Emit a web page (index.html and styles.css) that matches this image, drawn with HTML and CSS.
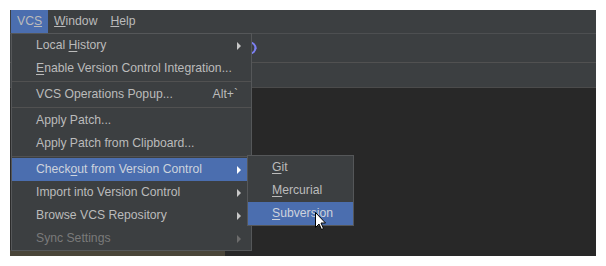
FILE: index.html
```html
<!DOCTYPE html>
<html lang="en">
<head>
    <meta charset="UTF-8">
    <title>VCS Menu</title>
    <link rel="stylesheet" href="styles.css">
</head>
<body>

<div class="ide">
    <!-- Main menu bar -->
    <div class="menubar">
        <span class="menu-title is-open">VC<u>S</u></span>
        <span class="menu-title"><u>W</u>indow</span>
        <span class="menu-title"><u>H</u>elp</span>
    </div>

    <!-- Toolbar (mostly hidden behind the menu) -->
    <div class="toolbar">
        <svg class="tool-icon" width="16" height="16" viewBox="0 0 16 16">
            <path d="M8 2.5 A5.5 5.5 0 1 1 2.5 8" fill="none" stroke="#7b7ff0" stroke-width="2"/>
            <path d="M12 11 L15 8 L13 7 Z" fill="#7b7ff0"/>
        </svg>
    </div>

    <!-- Navigation bar -->
    <div class="navbar"></div>

    <div class="workspace">
        <div class="project">
            <div class="project-tree"></div>
            <div class="project-row"></div>
        </div>
        <div class="editor"></div>
    </div>

    <!-- VCS dropdown -->
    <div class="popup vcs-menu">
        <div class="item"><span>Local <u>H</u>istory</span><i class="arrow"></i></div>
        <div class="item"><span><u>E</u>nable Version Control Integration...</span></div>
        <div class="separator"></div>
        <div class="item"><span>VCS Operations Popup...</span><span class="shortcut">Alt+`</span></div>
        <div class="separator"></div>
        <div class="item"><span>Apply Patch...</span></div>
        <div class="item"><span>Apply Patch from Clipboard...</span></div>
        <div class="separator"></div>
        <div class="item is-selected"><span>Check<u>o</u>ut from Version Control</span><i class="arrow"></i></div>
        <div class="item"><span>Import into Version Control</span><i class="arrow"></i></div>
        <div class="item"><span>Browse VCS Repository</span><i class="arrow"></i></div>
        <div class="item is-disabled"><span>Sync Settings</span><i class="arrow"></i></div>

        <!-- Checkout submenu -->
        <div class="popup checkout-menu">
            <div class="item"><span><u>G</u>it</span></div>
            <div class="item"><span><u>M</u>ercurial</span></div>
            <div class="item is-selected"><span><u>S</u>ubversion</span></div>
        </div>
    </div>

    <!-- Mouse pointer -->
    <svg class="cursor" width="12" height="19" viewBox="0 0 12 19">
        <path d="M0.5 0.5 L0.5 15.5 L4 12 L6.5 17.5 L8.5 16.5 L6 11 L10.5 11 Z" fill="#ffffff" stroke="#000000" stroke-width="1"/>
    </svg>
</div>

</body>
</html>
```

FILE: styles.css
```css
body {
    margin: 0;
    background-color: #ffffff;
    font-family: "Liberation Sans", Arial, sans-serif;
    font-size: 12.2px;
}

.ide {
    position: relative;
    display: flex;
    flex-direction: column;
    width: 586px;
    height: 246px;
    margin: 10px;
    background-color: #3c3f41;
}

.menubar {
    display: flex;
    height: 23px;
    padding-left: 1px;
    border-bottom: 1px solid #4d4f51;
}

.menu-title {
    padding: 0 6px;
    line-height: 23px;
    color: #bbbbbb;
}

.menu-title:last-child {
    margin-left: 1px;
}

.menu-title.is-open {
    background-color: #4b6eaf;
}

.toolbar {
    display: flex;
    align-items: center;
    height: 28px;
    border-bottom: 1px solid #515151;
}

.tool-icon {
    margin-left: 232px;
}

.navbar {
    height: 24px;
    border-bottom: 1px solid #4b4b4b;
}

.workspace {
    display: flex;
    flex: 1;
}

.project {
    display: flex;
    flex-direction: column;
    width: 215px;
    background-color: #2b2b2b;
}

.project-tree {
    flex: 1;
}

.project-row {
    height: 6px;
    background-color: #4a4539;
}

.editor {
    flex: 1;
    background-color: #282828;
}

/* Popup menus */
.popup {
    position: absolute;
    box-sizing: border-box;
    background-color: #3c3f41;
    border: 1px solid #555759;
}

.vcs-menu {
    left: 1px;
    top: 23px;
    width: 241px;
}

.checkout-menu {
    left: 235px;
    top: 121px;
    width: 107px;
}

.item {
    display: flex;
    align-items: center;
    justify-content: space-between;
    height: 23px;
    padding: 0 10px 0 24px;
    color: #bbbbbb;
    white-space: nowrap;
}

.item > span {
    margin-top: -1px;
}

.item u {
    text-underline-offset: 2px;
}

.item.is-selected {
    background-color: #4b6eaf;
    color: #cdd3dd;
}

.item.is-disabled {
    color: #7a7a7a;
}

.shortcut {
    margin-right: 3px;
}

.arrow {
    width: 0;
    height: 0;
    border-left: 4px solid #c8c8c8;
    border-top: 4px solid transparent;
    border-bottom: 4px solid transparent;
}

.item.is-selected .arrow {
    border-left-color: #ffffff;
}

.item.is-disabled .arrow {
    border-left-color: #6c6c6c;
}

.separator {
    height: 1px;
    margin: 1px 0;
    background-color: #515151;
}

.cursor {
    position: absolute;
    left: 305px;
    top: 202px;
}
```
